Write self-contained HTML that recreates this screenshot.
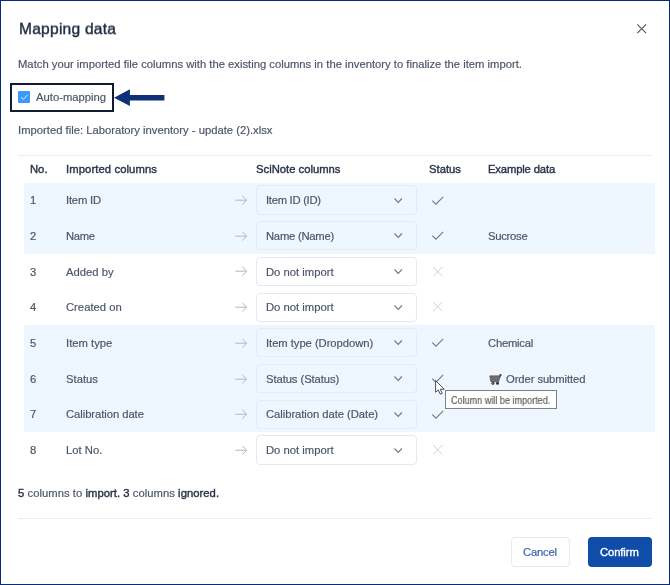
<!DOCTYPE html>
<html>
<head>
<meta charset="utf-8">
<title>Mapping data</title>
<style>
html,body{margin:0;padding:0;}
body{width:670px;height:585px;overflow:hidden;background:#fff;font-family:"Liberation Sans",sans-serif;color:#4a5468;position:relative;}
#frame{position:absolute;left:0;top:0;width:670px;height:585px;box-sizing:border-box;border:1px solid #082b7a;pointer-events:none;z-index:50;}
.t{position:absolute;white-space:nowrap;will-change:transform;font-size:11.25px;line-height:14px;color:#4c5569;-webkit-text-stroke-width:0.18px;}
.b{font-weight:400;color:#2b3548;-webkit-text-stroke-width:0.4px;}
.row{position:absolute;left:24px;width:630.8px;background:#eef6ff;}
.hr{position:absolute;left:18.2px;width:633.6px;height:1px;background:#eaecf1;}
.sel{position:absolute;left:256.3px;width:160.5px;height:29.2px;box-sizing:border-box;border:1px solid #e6e8ef;border-radius:4px;background:#fff;}
.sel.on{background:#eef6ff;border-color:#e4ebf5;}
svg{position:absolute;overflow:visible;}
</style>
</head>
<body>
<div id="frame"></div>

<div class="t" id="title" style="left:18.5px;top:19.7px;transform:scaleY(0.94);transform-origin:0 0;font-size:15.6px;letter-spacing:0.22px;line-height:20px;font-weight:400;color:#1f2a3f;-webkit-text-stroke:0.4px #1f2a3f;">Mapping data</div>
<svg id="close" style="left:636.8px;top:23.8px" width="9.4" height="9.4" viewBox="0 0 9.4 9.4"><path d="M0.3 0.3 L9.1 9.1 M9.1 0.3 L0.3 9.1" stroke="#4a5060" stroke-width="1.05" fill="none"/></svg>

<div class="t" id="sub" style="left:18px;top:57px;">Match your imported file columns with the existing columns in the inventory to finalize the item import.</div>

<!-- auto-mapping highlight -->
<div id="hl" style="position:absolute;left:10.3px;top:82.5px;width:103.6px;height:29.8px;box-sizing:border-box;border:2px solid #0f1c33;"></div>
<div id="cb" style="position:absolute;left:18.3px;top:90.9px;width:11.8px;height:11.9px;border-radius:1px;background:#3b99fc;"></div>
<svg style="left:18px;top:91px" width="12" height="12" viewBox="0 0 12 12"><path d="M3.1 6.3 L5.3 8.4 L9.8 3.8" stroke="#eaf3ff" stroke-width="0.95" fill="none"/></svg>
<div class="t" id="am" style="left:36px;top:90px;">Auto-mapping</div>
<svg id="arrow" style="left:114px;top:88px" width="52" height="20" viewBox="0 0 52 20"><path d="M0 9.65 L15.9 1.3 L15.9 6.9 L50.4 6.9 L50.4 12.4 L15.9 12.4 L15.9 17.9 Z" fill="#0d3079"/></svg>

<div class="t" id="imp" style="left:18px;top:123px;">Imported file: Laboratory inventory - update (2).xlsx</div>

<div class="hr" style="top:154.7px"></div>

<!-- header -->
<div class="t b" style="left:30px;top:162px;">No.</div>
<div class="t b" style="left:66px;top:162px;letter-spacing:0.1px;">Imported columns</div>
<div class="t b" style="left:256px;top:162px;">SciNote columns</div>
<div class="t b" style="left:429px;top:162px;">Status</div>
<div class="t b" style="left:488.4px;top:162px;letter-spacing:-0.15px;">Example data</div>

<!-- row backgrounds -->
<div class="row" style="top:182.6px;height:71.2px;"></div>
<div class="row" style="top:325.1px;height:107.1px;"></div>

<div id="rows">
<!-- row 1 -->
<div class="t" style="left:30px;top:193px;">1</div>
<div class="t" style="left:66px;top:193px;letter-spacing:-0.2px;">Item ID</div>
<svg style="left:235px;top:195.00px" width="13" height="10" viewBox="0 0 13 10"><path d="M0.3 5.2 H11.4 M7.3 0.9 L11.7 5.2 L7.3 9.5" stroke="#b1b6c1" stroke-width="1" fill="none"/></svg>
<div class="sel on" style="top:185.40px;"></div>
<div class="t" style="left:265.6px;top:193px;letter-spacing:-0.28px;">Item ID (ID)</div>
<svg style="left:394px;top:197.50px" width="9" height="6" viewBox="0 0 9 6"><path d="M0.5 0.5 L4.2 4.4 L7.9 0.5" stroke="#717a8c" stroke-width="1.15" fill="none"/></svg>
<svg style="left:432px;top:195.50px" width="12" height="9" viewBox="0 0 12 9"><path d="M0.3 4.6 L3.9 8.2 L11.2 0.8" stroke="#6f788a" stroke-width="1.1" fill="none"/></svg>
<!-- row 2 -->
<div class="t" style="left:30px;top:229px;">2</div>
<div class="t" style="left:66px;top:229px;letter-spacing:-0.3px;">Name</div>
<svg style="left:235px;top:230.72px" width="13" height="10" viewBox="0 0 13 10"><path d="M0.3 5.2 H11.4 M7.3 0.9 L11.7 5.2 L7.3 9.5" stroke="#b1b6c1" stroke-width="1" fill="none"/></svg>
<div class="sel on" style="top:221.12px;"></div>
<div class="t" style="left:265.6px;top:229px;letter-spacing:-0.25px;">Name (Name)</div>
<svg style="left:394px;top:233.22px" width="9" height="6" viewBox="0 0 9 6"><path d="M0.5 0.5 L4.2 4.4 L7.9 0.5" stroke="#717a8c" stroke-width="1.15" fill="none"/></svg>
<svg style="left:432px;top:231.22px" width="12" height="9" viewBox="0 0 12 9"><path d="M0.3 4.6 L3.9 8.2 L11.2 0.8" stroke="#6f788a" stroke-width="1.1" fill="none"/></svg>
<div class="t" style="left:488px;top:229px;letter-spacing:-0.27px;">Sucrose</div>
<!-- row 3 -->
<div class="t" style="left:30px;top:265px;">3</div>
<div class="t" style="left:66px;top:265px;">Added by</div>
<svg style="left:235px;top:266.44px" width="13" height="10" viewBox="0 0 13 10"><path d="M0.3 5.2 H11.4 M7.3 0.9 L11.7 5.2 L7.3 9.5" stroke="#b1b6c1" stroke-width="1" fill="none"/></svg>
<div class="sel" style="top:256.84px;"></div>
<div class="t" style="left:265.6px;top:265px;">Do not import</div>
<svg style="left:394px;top:268.94px" width="9" height="6" viewBox="0 0 9 6"><path d="M0.5 0.5 L4.2 4.4 L7.9 0.5" stroke="#717a8c" stroke-width="1.15" fill="none"/></svg>
<svg style="left:433px;top:266.74px" width="10" height="10" viewBox="0 0 10 10"><path d="M0.2 0.1 L9.3 9.2 M9.3 0.1 L0.2 9.2" stroke="#cdd1da" stroke-width="1" fill="none"/></svg>
<!-- row 4 -->
<div class="t" style="left:30px;top:300px;">4</div>
<div class="t" style="left:66px;top:300px;">Created on</div>
<svg style="left:235px;top:302.16px" width="13" height="10" viewBox="0 0 13 10"><path d="M0.3 5.2 H11.4 M7.3 0.9 L11.7 5.2 L7.3 9.5" stroke="#b1b6c1" stroke-width="1" fill="none"/></svg>
<div class="sel" style="top:292.56px;"></div>
<div class="t" style="left:265.6px;top:300px;">Do not import</div>
<svg style="left:394px;top:304.66px" width="9" height="6" viewBox="0 0 9 6"><path d="M0.5 0.5 L4.2 4.4 L7.9 0.5" stroke="#717a8c" stroke-width="1.15" fill="none"/></svg>
<svg style="left:433px;top:302.46px" width="10" height="10" viewBox="0 0 10 10"><path d="M0.2 0.1 L9.3 9.2 M9.3 0.1 L0.2 9.2" stroke="#cdd1da" stroke-width="1" fill="none"/></svg>
<!-- row 5 -->
<div class="t" style="left:30px;top:336px;">5</div>
<div class="t" style="left:66px;top:336px;">Item type</div>
<svg style="left:235px;top:337.88px" width="13" height="10" viewBox="0 0 13 10"><path d="M0.3 5.2 H11.4 M7.3 0.9 L11.7 5.2 L7.3 9.5" stroke="#b1b6c1" stroke-width="1" fill="none"/></svg>
<div class="sel on" style="top:328.28px;"></div>
<div class="t" style="left:265.6px;top:336px;letter-spacing:-0.05px;">Item type (Dropdown)</div>
<svg style="left:394px;top:340.38px" width="9" height="6" viewBox="0 0 9 6"><path d="M0.5 0.5 L4.2 4.4 L7.9 0.5" stroke="#717a8c" stroke-width="1.15" fill="none"/></svg>
<svg style="left:432px;top:338.38px" width="12" height="9" viewBox="0 0 12 9"><path d="M0.3 4.6 L3.9 8.2 L11.2 0.8" stroke="#6f788a" stroke-width="1.1" fill="none"/></svg>
<div class="t" style="left:488px;top:336px;letter-spacing:-0.23px;">Chemical</div>
<!-- row 6 -->
<div class="t" style="left:30px;top:372px;">6</div>
<div class="t" style="left:66px;top:372px;">Status</div>
<svg style="left:235px;top:373.60px" width="13" height="10" viewBox="0 0 13 10"><path d="M0.3 5.2 H11.4 M7.3 0.9 L11.7 5.2 L7.3 9.5" stroke="#b1b6c1" stroke-width="1" fill="none"/></svg>
<div class="sel on" style="top:364.00px;"></div>
<div class="t" style="left:265.6px;top:372px;letter-spacing:-0.08px;">Status (Status)</div>
<svg style="left:394px;top:376.10px" width="9" height="6" viewBox="0 0 9 6"><path d="M0.5 0.5 L4.2 4.4 L7.9 0.5" stroke="#717a8c" stroke-width="1.15" fill="none"/></svg>
<svg style="left:432px;top:374.10px" width="12" height="9" viewBox="0 0 12 9"><path d="M0.3 4.6 L3.9 8.2 L11.2 0.8" stroke="#6f788a" stroke-width="1.1" fill="none"/></svg>
<svg id="cart" style="left:488.5px;top:373.00px" width="13" height="12" viewBox="0 0 13 12"><path d="M10.4 4.6 L11.7 1.4" stroke="#3b3e48" stroke-width="1.5" fill="none"/><circle cx="11.6" cy="1.9" r="1.0" fill="#70344a"/><path d="M0.8 2.9 H10.9 L9.6 8.7 H2.1 Z" fill="#807a79" stroke="#444751" stroke-width="0.8"/><path d="M1.5 4.8 H10.2 M1.9 6.7 H9.8" stroke="#55565c" stroke-width="0.6"/><circle cx="3.9" cy="10.3" r="1.5" fill="#30343f"/><circle cx="8.5" cy="10.3" r="1.5" fill="#30343f"/><circle cx="3.7" cy="10.2" r="0.5" fill="#e6cfae"/></svg>
<div class="t" style="left:505.8px;top:372px;letter-spacing:-0.08px;">Order submitted</div>
<!-- row 7 -->
<div class="t" style="left:30px;top:407px;">7</div>
<div class="t" style="left:66px;top:407px;letter-spacing:-0.06px;">Calibration date</div>
<svg style="left:235px;top:409.32px" width="13" height="10" viewBox="0 0 13 10"><path d="M0.3 5.2 H11.4 M7.3 0.9 L11.7 5.2 L7.3 9.5" stroke="#b1b6c1" stroke-width="1" fill="none"/></svg>
<div class="sel on" style="top:399.72px;"></div>
<div class="t" style="left:265.6px;top:407px;letter-spacing:-0.05px;">Calibration date (Date)</div>
<svg style="left:394px;top:411.82px" width="9" height="6" viewBox="0 0 9 6"><path d="M0.5 0.5 L4.2 4.4 L7.9 0.5" stroke="#717a8c" stroke-width="1.15" fill="none"/></svg>
<svg style="left:432px;top:409.82px" width="12" height="9" viewBox="0 0 12 9"><path d="M0.3 4.6 L3.9 8.2 L11.2 0.8" stroke="#6f788a" stroke-width="1.1" fill="none"/></svg>
<!-- row 8 -->
<div class="t" style="left:30px;top:443px;">8</div>
<div class="t" style="left:66px;top:443px;">Lot No.</div>
<svg style="left:235px;top:445.04px" width="13" height="10" viewBox="0 0 13 10"><path d="M0.3 5.2 H11.4 M7.3 0.9 L11.7 5.2 L7.3 9.5" stroke="#b1b6c1" stroke-width="1" fill="none"/></svg>
<div class="sel" style="top:435.44px;"></div>
<div class="t" style="left:265.6px;top:443px;">Do not import</div>
<svg style="left:394px;top:447.54px" width="9" height="6" viewBox="0 0 9 6"><path d="M0.5 0.5 L4.2 4.4 L7.9 0.5" stroke="#717a8c" stroke-width="1.15" fill="none"/></svg>
<svg style="left:433px;top:445.34px" width="10" height="10" viewBox="0 0 10 10"><path d="M0.2 0.1 L9.3 9.2 M9.3 0.1 L0.2 9.2" stroke="#cdd1da" stroke-width="1" fill="none"/></svg>
</div>

<div class="t" id="sum" style="left:18px;top:486px;letter-spacing:0.04px;"><b class="b">5</b> columns to <b class="b">import.</b> <b class="b">3</b> columns <b class="b">ignored.</b></div>
<div class="hr" style="top:518.2px"></div>

<div id="cancel" style="position:absolute;left:510.5px;top:537.1px;width:59.4px;height:29.6px;box-sizing:border-box;border:1px solid #e5e8f0;border-radius:4px;background:#fff;"></div>
<div class="t" style="left:523.3px;top:545px;color:#3a60ad;letter-spacing:-0.18px;">Cancel</div>
<div id="confirm" style="position:absolute;left:588px;top:537.1px;width:63.8px;height:29.5px;border-radius:4px;background:#104da9;"></div>
<div class="t" style="left:600.2px;top:545px;color:#fff;-webkit-text-stroke:0.35px #fff;letter-spacing:-0.1px;">Confirm</div>

<!-- tooltip -->
<div id="tip" style="position:absolute;left:444.9px;top:390.3px;width:111.9px;height:19px;box-sizing:border-box;border:1.5px solid #808080;background:#fff;"></div>
<div class="t" id="tiptxt" style="left:450.8px;top:393px;font-size:10.5px;line-height:14px;color:#5e5e5e;transform:scaleX(0.864);transform-origin:0 0;">Column will be imported.</div>
<!-- cursor -->
<svg id="cursor" style="left:435px;top:380.1px" width="11" height="16" viewBox="0 0 11 16"><path d="M0.6 0.6 L0.6 12.2 L3.3 9.9 L5.3 14.2 L7.2 13.4 L5.3 9.2 L9.2 9.2 Z" fill="#fff" stroke="#42454d" stroke-width="0.95" stroke-linejoin="miter"/></svg>
</body>
</html>
